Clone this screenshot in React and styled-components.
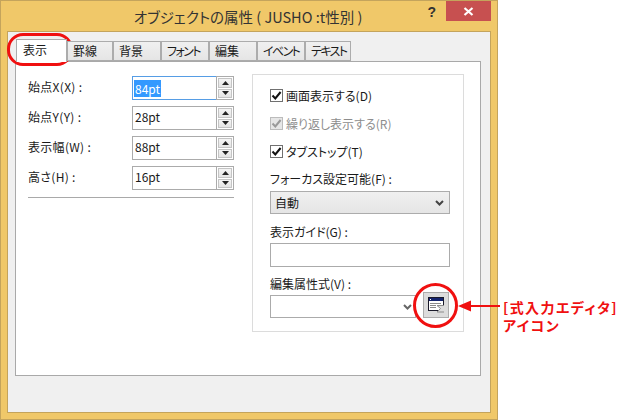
import React from 'react';
import styled, { createGlobalStyle } from 'styled-components';

const GlobalStyle = createGlobalStyle`
  html, body {
    margin: 0;
    background: #fff;
  }
  body {
    font-family: "Noto Sans CJK JP", "Liberation Sans", sans-serif;
    font-size: 12px;
    font-feature-settings: "palt";
    color: #1a1a1a;
  }
`;

const Page = styled.div`
  position: relative;
  display: flex;
  width: 622px;
  height: 420px;
  overflow: hidden;
`;

const Window = styled.div`
  display: flex;
  flex-direction: column;
  box-sizing: border-box;
  flex: none;
  width: 498px;
  height: 420px;
  padding: 0 6px 6px;
  background: #f0c869;
  border: 1px solid #c4a45c;
`;

const TitleBar = styled.div`
  position: relative;
  display: flex;
  justify-content: center;
  align-items: center;
  flex: none;
  height: 30px;
  padding-right: 2px;
  font-size: 14.5px;
  color: #333;
`;

const HelpMark = styled.span`
  position: absolute;
  top: 3px;
  right: 55px;
  font-family: "Liberation Sans", sans-serif;
  font-size: 14px;
  font-weight: 700;
  color: #333;
`;

const CloseButton = styled.div`
  position: absolute;
  top: 0;
  right: 0;
  display: flex;
  justify-content: center;
  align-items: center;
  width: 45px;
  height: 20px;
  background: #c75050;
`;

const Client = styled.div`
  display: flex;
  flex-direction: column;
  flex: 1;
  padding: 7px 9px 36px 7px;
  background: #f0f0f0;
  border: 1px solid #c4a45c;
`;

const TabRow = styled.div`
  position: relative;
  z-index: 1;
  display: flex;
  align-items: flex-end;
  flex: none;
  height: 22px;
  margin-left: 1px;
`;

const Tab = styled.div`
  box-sizing: border-box;
  flex: none;
  width: ${p => p.$width || 48}px;
  height: ${p => (p.$active ? 23 : 20)}px;
  margin-bottom: ${p => (p.$active ? -1 : 0)}px;
  padding: ${p => (p.$active ? '1px 0 0 6px' : '0 0 0 5px')};
  line-height: 17px;
  letter-spacing: ${p => (p.$narrow ? -1.6 : 0)}px;
  white-space: nowrap;
  background: ${p => (p.$active ? '#fff' : 'linear-gradient(#f0f0f0, #e5e5e5)')};
  border: 1px solid #acacac;
  border-bottom: ${p => (p.$active ? 'none' : '1px solid #acacac')};
`;

const Panel = styled.div`
  display: flex;
  flex: 1;
  gap: 18px;
  padding: 12px 0 0 12px;
  background: #fff;
  border: 1px solid #a9a9a9;
`;

const LeftColumn = styled.div`
  display: flex;
  flex-direction: column;
  gap: 6px;
  width: 206px;
  padding-top: 2px;
`;

const FieldRow = styled.div`
  display: flex;
  align-items: center;
  height: 24px;
`;

const FieldLabel = styled.span`
  flex: none;
  width: 104px;
  padding-bottom: 3px;
  letter-spacing: 0.3px;
`;

const SpinBox = styled.div`
  position: relative;
  display: flex;
  align-items: center;
  box-sizing: border-box;
  width: 102px;
  height: 24px;
  padding: 0 0 3px 1px;
  border: 1px solid ${p => (p.$focused ? '#569de5' : '#ababab')};
`;

const Selected = styled.span`
  margin-top: 3px;
  padding: 0 1px;
  line-height: 17px;
  color: #fff;
  background: #3399ff;
`;

const FieldValue = styled.span`
  padding-left: 1px;
`;

const SpinButtons = styled.div`
  position: absolute;
  top: -1px;
  right: -1px;
  bottom: -1px;
  display: flex;
  flex-direction: column;
  gap: 1px;
  box-sizing: border-box;
  width: 18px;
  padding: 1px;
  background: #fff;
  border: 1px solid #ababab;
`;

const SpinButton = styled.div`
  display: flex;
  justify-content: center;
  align-items: center;
  flex: 1;
  background: linear-gradient(#f4f4f4, #e4e4e4);
  border: 1px solid #c4c4c4;
`;

const Separator = styled.div`
  height: 1px;
  margin-top: 1px;
  background: #a9a9a9;
`;

const Group = styled.div`
  box-sizing: border-box;
  width: 212px;
  height: 258px;
  padding: 7px 13px 0 17px;
  border: 1px solid #dcdcdc;
`;

const CheckRow = styled.div`
  display: flex;
  align-items: center;
  gap: 3px;
  height: 28px;
  color: ${p => (p.$disabled ? '#8d8d8d' : 'inherit')};
`;

const CheckBox = styled.span`
  display: flex;
  justify-content: center;
  align-items: center;
  box-sizing: border-box;
  flex: none;
  width: 13px;
  height: 13px;
  margin-bottom: 1px;
  background: ${p => (p.$disabled ? '#e6e6e6' : '#fff')};
  border: 1px solid ${p => (p.$disabled ? '#bcbcbc' : '#707070')};
`;

const CheckText = styled.span`
  padding-bottom: 2px;
`;

const Caption = styled.div`
  height: 18px;
  margin-top: ${p => p.$top}px;
  line-height: 18px;
`;

const SelectBox = styled.div`
  display: flex;
  justify-content: space-between;
  align-items: center;
  box-sizing: border-box;
  width: 180px;
  height: 23px;
  margin-top: 3px;
  padding: 0 5px 0 4px;
  background: linear-gradient(#f0f0f0, #e5e5e5);
  border: 1px solid #acacac;
`;

const TextBox = styled.div`
  box-sizing: border-box;
  width: 180px;
  height: 24px;
  margin-top: 2px;
  border: 1px solid #ababab;
`;

const EditorRow = styled.div`
  display: flex;
  align-items: flex-end;
  gap: 7px;
  height: 26px;
  margin-top: -1px;
`;

const ComboBox = styled.div`
  display: flex;
  justify-content: flex-end;
  align-items: center;
  box-sizing: border-box;
  width: 146px;
  height: 23px;
  padding-right: 3px;
  border: 1px solid #ababab;
`;

const IconButton = styled.div`
  display: flex;
  justify-content: center;
  align-items: center;
  box-sizing: border-box;
  width: 26px;
  height: 26px;
  background: #dcdcdc;
  border: 1px solid #acacac;
`;

const Callout = styled.div`
  flex: none;
  margin: 298px 0 0 5px;
  font-size: 14px;
  font-weight: 700;
  line-height: 18px;
  letter-spacing: 1.4px;
  color: #f01010;
`;

const TabMarker = styled.div`
  position: absolute;
  top: 33px;
  left: 7px;
  box-sizing: border-box;
  width: 66px;
  height: 33px;
  border: 3px solid #f01010;
  border-radius: 16px;
`;

const IconMarker = styled.div`
  position: absolute;
  top: 283px;
  left: 413px;
  box-sizing: border-box;
  width: 45px;
  height: 45px;
  border: 3px solid #f01010;
  border-radius: 50%;
`;

const ArrowMark = styled.svg`
  position: absolute;
  top: 299px;
  left: 458px;
`;

const Chevron = ({ color = '#444' }) => (
  <svg width="9" height="6" viewBox="0 0 9 6">
    <path d="M1 1l3.500 3.500L8 1" fill="none" stroke={color} strokeWidth="2" />
  </svg>
);

const SpinArrow = ({ down }) => (
  <svg width="7" height="4" viewBox="0 0 7 4">
    <path d={down ? 'M0 0h7L3.500 4z' : 'M0 4h7L3.500 0z'} fill="#222" />
  </svg>
);

const Check = ({ color = '#111' }) => (
  <svg width="11" height="11" viewBox="0 0 11 11">
    <path d="M1.500 5.500l2.800 3L9.600 2" fill="none" stroke={color} strokeWidth="2" />
  </svg>
);

const ExpressionIcon = () => (
  <svg width="17" height="16" viewBox="0 0 17 16">
    <rect x="0.5" y="0.5" width="15" height="13" fill="#fff" stroke="#1a1a2a" />
    <rect x="1" y="1" width="14" height="3" fill="#14246e" />
    <rect x="2" y="2" width="1" height="1" fill="#fff" />
    <path d="M2 6.500h11M2 8.500h6M2 10.500h6" stroke="#8a8a8a" />
    <path d="M16 8.500H9l3.500 3L9 15h7" fill="#dcdcdc" stroke="#8c8c8c" />
  </svg>
);

const tabs = [
  { label: '表示', active: true, width: 51 },
  { label: '罫線', width: 46 },
  { label: '背景' },
  { label: 'フォント', narrow: true },
  { label: '編集' },
  { label: 'イベント', narrow: true },
  { label: 'テキスト', narrow: true, width: 46 },
];

const fields = [
  { label: '始点X(X) :', value: '84pt', focused: true },
  { label: '始点Y(Y) :', value: '28pt' },
  { label: '表示幅(W) :', value: '88pt' },
  { label: '高さ(H) :', value: '16pt' },
];

const checks = [
  { label: '画面表示する(D)' },
  { label: '繰り返し表示する(R)', disabled: true },
  { label: 'タブストップ(T)' },
];

const App = () => (
  <Page>
    <GlobalStyle />
    <Window>
      <TitleBar>
        オブジェクトの属性 ( JUSHO :t性別 )
        <HelpMark>?</HelpMark>
        <CloseButton>
          <svg width="11" height="9" viewBox="0 0 11 9">
            <path d="M1.500 1l8 7M9.500 1l-8 7" stroke="#fff" strokeWidth="2.2" />
          </svg>
        </CloseButton>
      </TitleBar>
      <Client>
        <TabRow>
          {tabs.map(t => (
            <Tab key={t.label} $active={t.active} $narrow={t.narrow} $width={t.width}>{t.label}</Tab>
          ))}
        </TabRow>
        <Panel>
          <LeftColumn>
            {fields.map(f => (
              <FieldRow key={f.label}>
                <FieldLabel>{f.label}</FieldLabel>
                <SpinBox $focused={f.focused}>
                  {f.focused ? <Selected>{f.value}</Selected> : <FieldValue>{f.value}</FieldValue>}
                  <SpinButtons>
                    <SpinButton><SpinArrow /></SpinButton>
                    <SpinButton><SpinArrow down /></SpinButton>
                  </SpinButtons>
                </SpinBox>
              </FieldRow>
            ))}
            <Separator />
          </LeftColumn>
          <Group>
            {checks.map(c => (
              <CheckRow key={c.label} $disabled={c.disabled}>
                <CheckBox $disabled={c.disabled}>
                  <Check color={c.disabled ? '#9a9a9a' : '#111'} />
                </CheckBox>
                <CheckText>{c.label}</CheckText>
              </CheckRow>
            ))}
            <Caption $top={4}>フォーカス設定可能(F) :</Caption>
            <SelectBox>
              自動
              <Chevron />
            </SelectBox>
            <Caption $top={9}>表示ガイド(G) :</Caption>
            <TextBox />
            <Caption $top={8}>編集属性式(V) :</Caption>
            <EditorRow>
              <ComboBox><Chevron color="#666" /></ComboBox>
              <IconButton><ExpressionIcon /></IconButton>
            </EditorRow>
          </Group>
        </Panel>
      </Client>
    </Window>
    <Callout>
      [式入力エディタ]
      <br />
      アイコン
    </Callout>
    <TabMarker />
    <IconMarker />
    <ArrowMark width="42" height="14" viewBox="0 0 42 14">
      <path d="M0 7l13-5.500v4.500h29v2H13v4.500z" fill="#f01010" />
    </ArrowMark>
  </Page>
);

export default App;
